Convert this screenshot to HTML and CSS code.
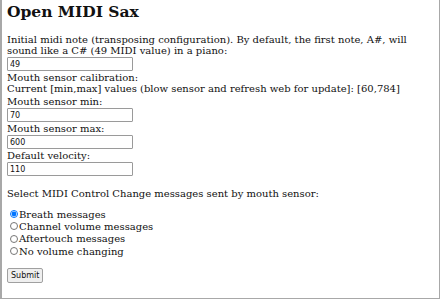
FILE: index.html
```html
<!DOCTYPE html>
<html lang="en">
<head>
    <meta charset="UTF-8">
    <title>Open MIDI Sax</title>
    <link rel="stylesheet" href="styles.css">
</head>
<body>
    <div class="page">
        <h1>Open MIDI Sax</h1>

        <form class="config">
            <p class="intro">Initial midi note (transposing configuration). By default, the first note, A#, will sound like a C# (49 MIDI value) in a piano:</p>
            <input type="text" class="field" name="note" value="49">

            <div>Mouth sensor calibration:</div>
            <div class="current">Current [min,max] values (blow sensor and refresh web for update]: [60,784]</div>

            <div>Mouth sensor min:</div>
            <input type="text" class="field" name="min" value="70">
            <div>Mouth sensor max:</div>
            <input type="text" class="field" name="max" value="600">
            <div>Default velocity:</div>
            <input type="text" class="field" name="velocity" value="110">

            <p class="select-label">Select MIDI Control Change messages sent by mouth sensor:</p>

            <div class="options">
                <label><input type="radio" name="cc" value="breath" checked>Breath messages</label>
                <label><input type="radio" name="cc" value="volume">Channel volume messages</label>
                <label><input type="radio" name="cc" value="aftertouch">Aftertouch messages</label>
                <label><input type="radio" name="cc" value="none">No volume changing</label>
            </div>

            <button type="submit" class="submit-btn">Submit</button>
        </form>
    </div>
</body>
</html>
```

FILE: styles.css
```css
* {
    box-sizing: border-box;
}

body {
    margin: 0;
    background: white;
    color: #111;
    font-family: "DejaVu Serif", serif;
    font-size: 10px;
}

.page {
    height: 299px;
    border: 1px solid #a8a8a8;
    border-top: none;
    border-left-width: 2px;
    padding: 0 5px;
    overflow: hidden;
}

h1 {
    font-size: 15.5px;
    margin: 0;
    padding-top: 2px;
}

.config {
    display: flex;
    flex-direction: column;
    align-items: flex-start;
}

.intro {
    margin: 13px 0 0;
}

.current {
    margin-bottom: 2px;
}

.field {
    width: 126px;
    height: 14px;
    margin: 1px 0;
    padding: 0 2px;
    border: 1px solid #9a9a9a;
    border-radius: 1px;
    font-family: "DejaVu Sans", sans-serif;
    font-size: 8px;
    color: #111;
}

.select-label {
    margin: 11px 0 9px;
}

.options {
    display: flex;
    flex-direction: column;
}

.options label {
    display: flex;
    align-items: center;
    height: 12.3px;
}

.options input {
    width: 8px;
    height: 8px;
    margin: 0 1px 0 3px;
}

.submit-btn {
    margin-top: 11px;
    height: 15px;
    padding: 0 3px;
    border: 1px solid #a0a0a0;
    border-radius: 2px;
    background: #efefef;
    font-family: "DejaVu Sans", sans-serif;
    font-size: 8px;
    color: #111;
}
```
